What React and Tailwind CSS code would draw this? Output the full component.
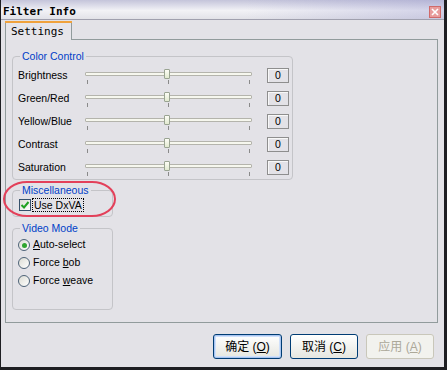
import React from 'react';

const rows = ['Brightness', 'Green/Red', 'Yellow/Blue', 'Contrast', 'Saturation'];

function Slider() {
  return (
    <div className="relative w-[167px] h-[17px] pt-[5px] flex flex-col">
      <div className="h-[4px] border border-[#b4b4ac] bg-[#f6f7ee] rounded-[1px]" />
      <div className="mt-[4px] h-[4px] flex justify-between px-[2px]">
        <div className="w-px h-[4px] bg-[#8a8a8a]" />
        <div className="w-px h-[4px] bg-[#8a8a8a]" />
        <div className="w-px h-[4px] bg-[#8a8a8a]" />
      </div>
      {/* thumb */}
      <div className="absolute left-[79px] top-[2px] w-[6px] h-[10px] border border-[#9aa492] rounded-[1px] bg-gradient-to-b from-[#fdfdf6] to-[#e2ead0]" />
    </div>
  );
}

function Radio({ checked, children }) {
  return (
    <div className="h-[18px] flex items-center pl-[5px]">
      <div className="w-[12px] h-[12px] rounded-full border border-[#4e6378] bg-gradient-to-br from-[#dcdcd4] to-white flex items-center justify-center">
        {checked && <div className="w-[5px] h-[5px] rounded-full bg-[#2fa52f]" />}
      </div>
      <span className="ml-[3px]">{children}</span>
    </div>
  );
}

export default function App() {
  return (
    <div className="relative w-[447px] h-[370px] bg-[#e3e2e7] border-l border-r-[3px] border-b-[3px] border-[#1e1e22] flex flex-col font-['Liberation_Sans','Noto_Sans_CJK_SC',sans-serif] text-[10.5px] text-black">
      {/* Title bar */}
      <div className="h-[20px] shrink-0 flex items-start justify-between border-b border-[#a0a0ae] bg-[linear-gradient(to_right,rgba(255,255,255,0)_55%,rgba(150,150,205,0.35)),linear-gradient(to_bottom,#c4c4da,#f2f2f6_55%,#e2e2e8)]">
        <span className="mt-[6px] ml-[2px] font-['DejaVu_Sans_Mono',monospace] font-bold text-[11px] leading-[12px]">Filter Info</span>
        <div className="mt-[6px] mr-[3px] w-[12px] h-[12px] bg-[#e89c9c] border border-[#d06a6a] flex items-center justify-center">
          <svg width="8" height="8" viewBox="0 0 8 8">
            <path d="M1 1L7 7M7 1L1 7" stroke="white" strokeWidth="1.6" />
          </svg>
        </div>
      </div>

      {/* Tab strip */}
      <div className="pl-[4px] pt-[1px] shrink-0">
        <div className="relative z-10 w-[67px] h-[19px] border-l border-r border-[#919b9c] bg-[#e6e5ea] flex flex-col">
          <div className="h-[2px] bg-[#f0a23c] -mx-px" />
          <div className="pl-[5px] pt-[3px] font-['DejaVu_Sans_Mono',monospace] text-[11px] leading-[12px]">Settings</div>
        </div>
      </div>

      {/* Panel */}
      <div className="-mt-px ml-[4px] w-[433px] h-[284px] shrink-0 border border-[#919b9c] pl-[6px] pt-[10px] flex flex-col items-start">
        <fieldset className="w-[281px] border border-[#c4c4c8] rounded-[4px]">
          <legend className="ml-[7px] px-[2px] text-[#0040c8] leading-[12px]">Color Control</legend>
          <div className="mt-[2px] flex flex-col">
            {rows.map((r) => (
              <div key={r} className="h-[23px] flex items-center pl-[5px]">
                <span className="w-[67px]">{r}</span>
                <Slider />
                <div className="ml-[15px] w-[22px] h-[15px] border border-[#8e8e8e] shadow-[inset_1px_1px_0_#f8f8f8] text-center leading-[13px]">0</div>
              </div>
            ))}
          </div>
        </fieldset>

        <fieldset className="mt-[4px] w-[101px] border border-[#c4c4c8] rounded-[4px] pb-[3px]">
          <legend className="ml-[7px] px-[2px] text-[#0040c8] leading-[12px]">Miscellaneous</legend>
          <div className="mt-[1px] h-[16px] flex items-center pl-[6px]">
            <div className="w-[12px] h-[12px] border border-[#35506a] bg-gradient-to-br from-[#dcdcd4] to-white flex items-center justify-center">
              <svg width="10" height="10" viewBox="0 0 10 10">
                <path d="M1.5 5L4 7.5L8.5 2" fill="none" stroke="#21a121" strokeWidth="2" />
              </svg>
            </div>
            <span className="ml-[1px] px-px border border-dotted border-black leading-[12px]">Use DxVA</span>
          </div>
        </fieldset>

        <fieldset className="mt-[5px] w-[101px] border border-[#c4c4c8] rounded-[4px] pb-[19px]">
          <legend className="ml-[7px] px-[2px] text-[#0040c8] leading-[12px]">Video Mode</legend>
          <div className="mt-[2px] flex flex-col">
            <Radio checked><u>A</u>uto-select</Radio>
            <Radio>Force <u>b</u>ob</Radio>
            <Radio>Force <u>w</u>eave</Radio>
          </div>
        </fieldset>
      </div>

      {/* Buttons */}
      <div className="mt-[11px] flex justify-end gap-[8px] pr-[10px] text-[12px]">
        <button className="w-[69px] h-[25px] rounded-[3px] border border-[#003c74] bg-gradient-to-b from-white to-[#e6e6e0] shadow-[inset_0_0_0_1px_#a8c4f0,inset_0_0_0_2px_#cfe0fb]">
          确定 (<u>O</u>)
        </button>
        <button className="w-[68px] h-[25px] rounded-[3px] border border-[#003c74] bg-gradient-to-b from-white to-[#e6e6e0]">
          取消 (<u>C</u>)
        </button>
        <button className="w-[68px] h-[25px] rounded-[3px] border border-[#c9c7ba] bg-[#f2f2ee] text-[#aca899]">
          应用 (<u>A</u>)
        </button>
      </div>

      {/* red annotation ellipse */}
      <div className="absolute left-[2px] top-[181px] w-[113px] h-[36px] border-2 border-[#e3405a] rounded-[24px/18px]" />
    </div>
  );
}
